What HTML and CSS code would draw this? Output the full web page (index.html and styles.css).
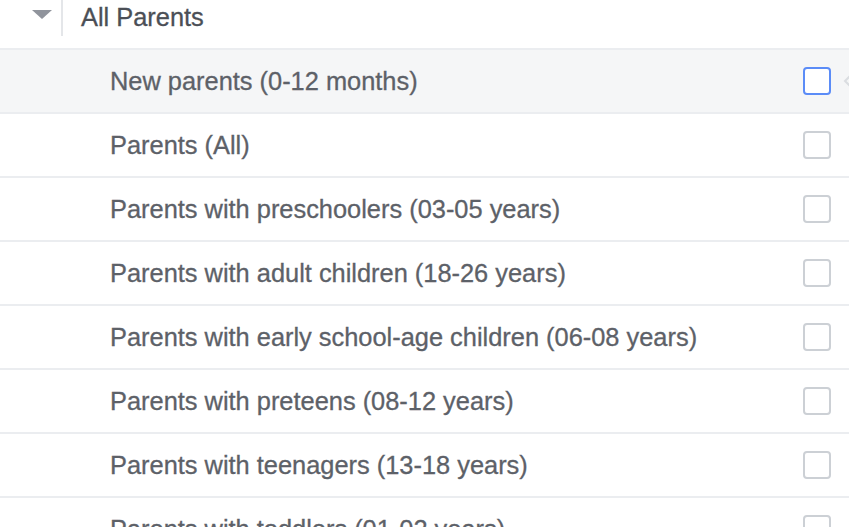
FILE: index.html
```html
<!DOCTYPE html>
<html lang="en">
<head>
    <meta charset="UTF-8">
    <meta name="viewport" content="width=device-width, initial-scale=1.0">
    <title>All Parents</title>
    <link rel="stylesheet" href="styles.css">
</head>
<body>
    <div class="group-head">
        <span class="caret"></span>
        <span class="divider"></span>
        <span class="group-title">All Parents</span>
    </div>

    <ul class="option-list">
        <li class="option hover">
            <span class="option-label">New parents (0-12 months)</span>
            <span class="check focused"></span>
            <svg class="peek" width="10" height="16" viewBox="0 0 10 16">
                <path d="M8 2 L2 8 L8 14" fill="none" stroke="#dadde1" stroke-width="2"/>
            </svg>
        </li>
        <li class="option">
            <span class="option-label">Parents (All)</span>
            <span class="check"></span>
        </li>
        <li class="option">
            <span class="option-label">Parents with preschoolers (03-05 years)</span>
            <span class="check"></span>
        </li>
        <li class="option">
            <span class="option-label">Parents with adult children (18-26 years)</span>
            <span class="check"></span>
        </li>
        <li class="option">
            <span class="option-label">Parents with early school-age children (06-08 years)</span>
            <span class="check"></span>
        </li>
        <li class="option">
            <span class="option-label">Parents with preteens (08-12 years)</span>
            <span class="check"></span>
        </li>
        <li class="option">
            <span class="option-label">Parents with teenagers (13-18 years)</span>
            <span class="check"></span>
        </li>
        <li class="option">
            <span class="option-label">Parents with toddlers (01-02 years)</span>
            <span class="check"></span>
        </li>
    </ul>
</body>
</html>
```

FILE: styles.css
```css
body {
    margin: 0;
    padding: 0;
    overflow: hidden;
    background: #fff;
    font-family: "Liberation Sans", Arial, sans-serif;
    font-size: 25.4px;
    color: #5d6168;
    -webkit-text-stroke: 0.3px currentColor;
}

.group-head {
    height: 48px;
    display: flex;
    align-items: flex-start;
}

.caret {
    width: 0;
    height: 0;
    margin: 10px 0 0 32px;
    border-left: 10px solid transparent;
    border-right: 10px solid transparent;
    border-top: 9px solid #90949c;
}

.divider {
    width: 2px;
    height: 36px;
    margin-left: 9px;
    background-color: #e4e6e9;
}

.group-title {
    margin-left: 18px;
    line-height: 35px;
    color: #4b4f56;
}

.option-list {
    margin: 0;
    padding: 0;
    list-style: none;
}

.option {
    position: relative;
    height: 62px;
    display: flex;
    align-items: center;
    justify-content: space-between;
    padding: 0 18px 0 110px;
    border-top: 2px solid #ebedf0;
}

.option.hover {
    background-color: #f5f6f7;
}

.option-label {
    white-space: nowrap;
}

.check {
    width: 24px;
    height: 24px;
    border: 2px solid #ccd0d5;
    border-radius: 4px;
    background: #fff;
}

.check.focused {
    border-color: #5b8cf7;
}

.peek {
    position: absolute;
    right: -4px;
    top: 23px;
}
```
